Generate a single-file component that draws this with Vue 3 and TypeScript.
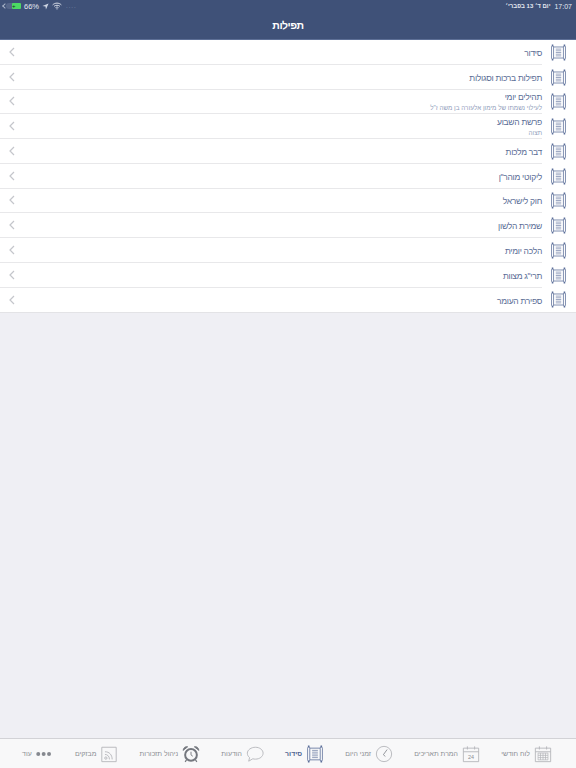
<template>
  <div class="screen">
    <header class="header">
      <div class="status" dir="ltr">
        <div class="status-left">
          <span class="chev-small"></span>
          <span class="battery"><span class="battery-fill">+</span></span>
          <span>66%</span>
          <svg class="st-arrow" width="7" height="7" viewBox="0 0 8 8"><path d="M7.500 .5 .5 3.500 4 4 4.500 7.500Z" fill="#cfd6e4" /></svg>
          <svg width="10" height="8" viewBox="0 0 11 8" fill="none" stroke="#e6eaf2">
            <path d="M.7 2.800C3.400.2 7.600.2 10.300 2.800M2.300 4.300C4 2.800 7 2.800 8.700 4.300M3.900 5.800C4.800 5 6.200 5 7.100 5.800" />
            <path d="M5.500 8 4.500 6.800H6.500Z" fill="#e6eaf2" stroke="none" />
          </svg>
          <span class="carrier">....</span>
        </div>
        <div class="status-right">
          <span class="status-date" dir="rtl">יום ד׳ 13 בפברי׳</span>
          <span>17:07</span>
        </div>
      </div>
      <h1 class="title">תפילות</h1>
    </header>

    <ul class="list" dir="rtl">
      <li v-for="item in items" :key="item.title" class="row">
        <svg class="scroll" viewBox="0 0 20 20" fill="none" stroke="#5b6e99">
          <use href="#scroll-icon" width="20" height="20" />
        </svg>
        <div class="row-body">
          <div class="row-text">
            <div class="row-title">{{ item.title }}</div>
            <div v-if="item.sub" class="row-sub">{{ item.sub }}</div>
          </div>
          <svg class="chevron" width="6" height="10" viewBox="0 0 6 10" fill="none">
            <path d="M5 1 1 5l4 4" stroke="#c4c6cb" stroke-width="1.200" />
          </svg>
        </div>
      </li>
    </ul>

    <div class="spacer"></div>

    <nav class="tabs" dir="rtl">
      <div v-for="tab in tabs" :key="tab.label" class="tab" :class="{ active: tab.icon === 'scroll' }">
        <svg class="tab-icon" viewBox="0 0 20 20" fill="none" :stroke="tab.icon === 'scroll' ? '#5b6e99' : '#b4b5ba'">
          <template v-if="tab.icon === 'scroll'">
            <use href="#scroll-icon" width="20" height="20" />
          </template>
          <template v-else-if="tab.icon === 'month'">
            <path d="M1.500 3.500h17v15h-17zM1.500 7.500h17M6 1.500v3.500M14 1.500v3.500" />
            <path d="M4.500 9h11v7.500h-11zM4.500 11.500h11M4.500 14h11M7.200 9v7.500M10 9v7.500M12.800 9v7.500" stroke-width=".8" />
          </template>
          <template v-else-if="tab.icon === 'date'">
            <path d="M1.500 3.500h17v15h-17zM1.500 7.500h17M6 1.500v3.500M14 1.500v3.500" />
            <text x="10" y="15.500" class="cal-num">24</text>
          </template>
          <template v-else-if="tab.icon === 'clock'">
            <circle cx="10" cy="10" r="8.500" />
            <path d="M13.500 5 9.300 10.800l2.200 1.900" stroke="#8a8d93" />
          </template>
          <template v-else-if="tab.icon === 'chat'">
            <path d="M10.500 2.500c4.700 0 8.500 2.900 8.500 6.600s-3.800 6.600-8.500 6.600c-1 0-2-.1-2.900-.4L3 18l1-4C2.400 12.800 1.500 11.100 1.500 9.100 1.500 5.400 5.800 2.500 10.500 2.500Z" />
          </template>
          <template v-else-if="tab.icon === 'alarm'">
            <circle cx="10" cy="11" r="6.500" stroke="#74777e" stroke-width="2.200" />
            <path d="M10 7.500V11l2 1.500" stroke="#74777e" />
            <path d="M1.200 6C1.500 3 3.800 1.300 6.300 2ZM18.800 6C18.500 3 16.200 1.300 13.700 2Z" fill="#74777e" stroke="#74777e" />
            <path d="M5 16.500 3.500 18.800M15 16.500l1.500 2.300" stroke="#74777e" stroke-width="1.300" />
          </template>
          <template v-else-if="tab.icon === 'rss'">
            <path d="M2 2.500h16v16H2z" />
            <circle cx="6.500" cy="14.500" r="1.300" />
            <path d="M5.500 10.500c2.800 0 5 2 5 5.500M5.500 7.500c4.800 0 8 3.300 8 8.500" />
          </template>
          <template v-else>
            <circle cx="2.500" cy="10" r="2.200" fill="#85888f" stroke="none" />
            <circle cx="8.500" cy="10" r="2.200" fill="#85888f" stroke="none" />
            <circle cx="14.500" cy="10" r="2.200" fill="#85888f" stroke="none" />
          </template>
        </svg>
        <span class="tab-label">{{ tab.label }}</span>
      </div>
    </nav>

    <svg class="defs" width="0" height="0">
      <symbol id="scroll-icon" viewBox="0 0 20 20">
        <path d="M4 3.500h12M4 16.500h12" stroke-width=".9" />
        <path d="M1.800 3.500C1.800 2.600 2.200 2.200 3 2.200s1.200.4 1.200 1.300v13c0 .9-.4 1.300-1.200 1.300s-1.200-.4-1.200-1.300zM15.800 3.500c0-.9.400-1.300 1.200-1.300s1.200.4 1.200 1.300v13c0 .9-.4 1.300-1.200 1.300s-1.200-.4-1.200-1.300z" fill="#fff" stroke-width=".9" />
        <path d="M3 .5v2M17 .5v2M3 17.500v2M17 17.500v2" stroke-width="1.800" />
        <path d="M6.800 6h6.400M6.800 8h6.400M6.800 10h6.400M6.800 12h6.400M6.800 14h6.400" stroke-width=".7" />
      </symbol>
    </svg>
  </div>
</template>

<script setup lang="ts">
const items = [
  { title: 'סידור' },
  { title: 'תפילות ברכות וסגולות' },
  { title: 'תהילים יומי', sub: 'לעילוי נשמתו של מימון אלעזרה בן משה ז"ל' },
  { title: 'פרשת השבוע', sub: 'תצוה' },
  { title: 'דבר מלכות' },
  { title: 'ליקוטי מוהר"ן' },
  { title: 'חוק לישראל' },
  { title: 'שמירת הלשון' },
  { title: 'הלכה יומית' },
  { title: 'תרי"ג מצוות' },
  { title: 'ספירת העומר' }
]

const tabs = [
  { label: 'לוח חודשי', icon: 'month' },
  { label: 'המרת תאריכים', icon: 'date' },
  { label: 'זמני היום', icon: 'clock' },
  { label: 'סידור', icon: 'scroll' },
  { label: 'הודעות', icon: 'chat' },
  { label: 'ניהול תזכורות', icon: 'alarm' },
  { label: 'מבזקים', icon: 'rss' },
  { label: 'עוד', icon: 'dots' }
]
</script>

<style>
html,
body {
  margin: 0;
  background: #efeff4;
}
</style>

<style scoped>
.screen {
  width: 576px;
  height: 768px;
  display: flex;
  flex-direction: column;
  overflow: hidden;
  background: #efeff4;
  font-family: "Liberation Sans", "DejaVu Sans", sans-serif;
}
.header {
  height: 40px;
  box-sizing: border-box;
  flex-shrink: 0;
  background: #3f5178;
  border-bottom: 1px solid #5d6f96;
  color: #fff;
}
.status {
  height: 12px;
  padding: 0 4px 0 3px;
  display: flex;
  justify-content: space-between;
  align-items: center;
  font-size: 7.500px;
  color: #e6eaf2;
}
.status-left,
.status-right {
  display: flex;
  align-items: center;
  gap: 3px;
}
.status-right {
  gap: 4px;
  font-size: 7px;
}
.status-date {
  font-size: 6px;
  font-weight: 700;
}
.carrier {
  color: #8b98b5;
  font-size: 6px;
  letter-spacing: 1px;
  margin-left: 1px;
}
.chev-small {
  width: 3px;
  height: 3px;
  border-left: 1px solid #aab4c9;
  border-bottom: 1px solid #aab4c9;
  transform: rotate(45deg);
  margin-right: -4px;
}
.battery {
  width: 15px;
  height: 6px;
  border-radius: 3px;
  display: block;
  background: #56668a;
}
.battery-fill {
  display: block;
  width: 9px;
  height: 6px;
  margin-left: 6px;
  background: #4cd964;
  border-radius: 1px;
  font-size: 6px;
  line-height: 6px;
  color: #12331b;
}
.title {
  margin: 2px 0 0;
  font-size: 10.500px;
  letter-spacing: -.5px;
  line-height: 22px;
  font-weight: 700;
  text-align: center;
}
.list {
  margin: 0;
  padding: 0;
  list-style: none;
  background: #fff;
  border-bottom: 1px solid #e3e3e6;
}
.row {
  height: 24.750px;
  display: flex;
  align-items: center;
}
.scroll {
  width: 17px;
  height: 17px;
  margin: 0 9px 0 8px;
  flex-shrink: 0;
}
.row-body {
  flex: 1;
  height: 100%;
  box-sizing: border-box;
  display: flex;
  align-items: center;
  justify-content: space-between;
  border-bottom: 1px solid #e8e8ea;
  padding-left: 9px;
}
.row:last-child .row-body {
  border-bottom: 0;
}
.row-text {
  display: flex;
  flex-direction: column;
  justify-content: center;
  padding-top: 3px;
}
.row-title {
  font-size: 8.500px;
  letter-spacing: -.3px;
  line-height: 11px;
  color: #596c95;
}
.row-sub {
  font-size: 6.300px;
  line-height: 10px;
  color: #8f9cba;
}
.spacer {
  flex: 1;
}
.tabs {
  height: 29px;
  flex-shrink: 0;
  display: flex;
  justify-content: space-between;
  align-items: center;
  padding: 0 24px 0 22px;
  background: #f8f8f9;
  border-top: 1px solid #d2d2d6;
}
.tab {
  display: flex;
  align-items: center;
  gap: 4px;
}
.tab-icon {
  width: 18px;
  height: 18px;
  flex-shrink: 0;
}
.tab-label {
  font-size: 6.900px;
  color: #8a8d93;
  white-space: nowrap;
}
.active .tab-label {
  color: #4f6391;
  font-weight: 700;
}
.cal-num {
  font-family: "Liberation Sans", sans-serif;
  font-size: 6px;
  text-anchor: middle;
  fill: #8a8d93;
  stroke: none;
}
.defs {
  position: absolute;
}
</style>
